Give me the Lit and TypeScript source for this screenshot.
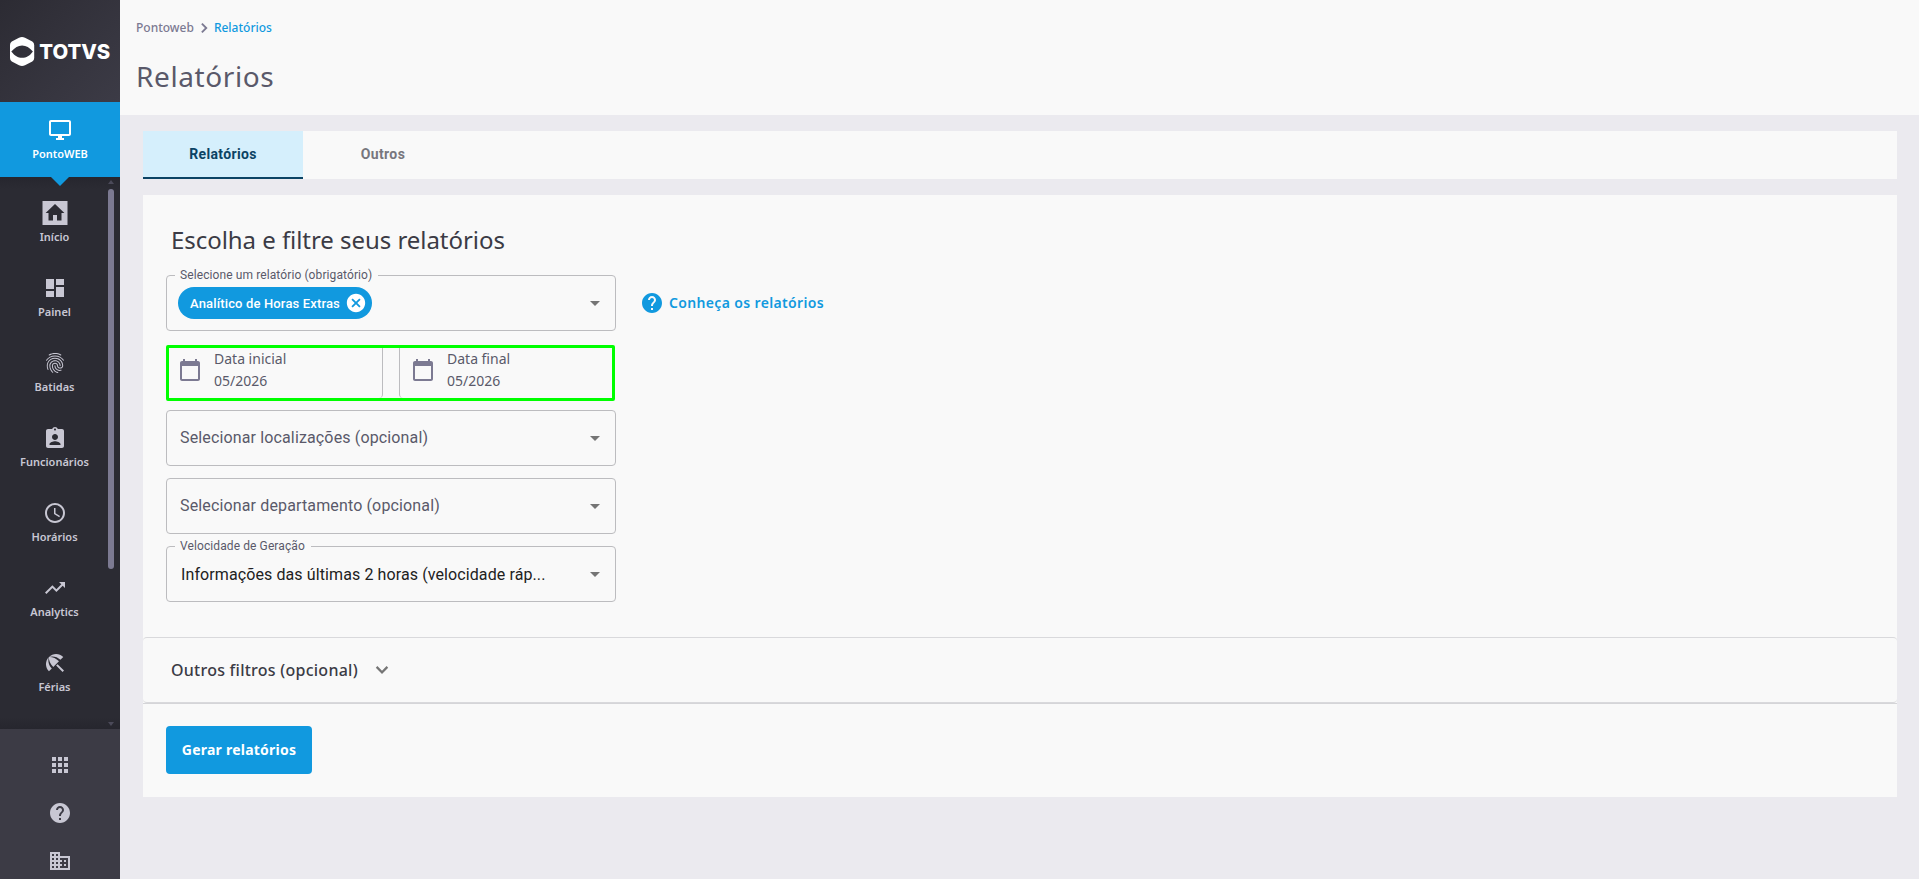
import { LitElement, html, css, svg, nothing } from "lit";
import { customElement } from "lit/decorators.js";

const paths: Record<string, string> = {
  monitor: "M21 2H3c-1.100 0-2 .9-2 2v12c0 1.100.9 2 2 2h7v2H8v2h8v-2h-2v-2h7c1.100 0 2-.9 2-2V4c0-1.100-.9-2-2-2zm0 14H3V4h18v12z",
  home: "M-.5 0h25v24H-.5z M12 3 2.600 12H5.500v7.500h4.500V14h4v5.500h4.500V12h2.900z",
  dashboard: "M3 13h8V3H3v10zm0 8h8v-6H3v6zm10 0h8V11h-8v10zm0-18v6h8V3h-8z",
  fingerprint: "M17.810 4.470c-.08 0-.16-.02-.23-.06C15.660 3.420 14 3 12.010 3c-1.980 0-3.860.47-5.570 1.410-.24.13-.54.04-.68-.2-.13-.24-.04-.55.2-.68C7.820 2.520 9.860 2 12.010 2c2.130 0 3.990.47 6.030 1.520.25.13.34.43.21.67-.09.18-.26.28-.44.28zM3.500 9.720c-.1 0-.2-.03-.29-.09-.23-.16-.28-.47-.12-.7.99-1.400 2.250-2.500 3.750-3.270C9.980 4.040 14 4.030 17.150 5.650c1.500.77 2.760 1.860 3.750 3.250.16.22.11.54-.12.7-.23.16-.54.11-.7-.12-.9-1.260-2.040-2.250-3.390-2.940-2.870-1.470-6.540-1.470-9.400.01-1.360.7-2.500 1.700-3.400 2.960-.08.14-.23.21-.39.21zm6.250 12.070c-.13 0-.26-.05-.35-.15-.87-.87-1.340-1.430-2.010-2.640-.69-1.230-1.050-2.730-1.050-4.340 0-2.970 2.540-5.390 5.660-5.390s5.660 2.420 5.660 5.390c0 .28-.22.5-.5.5s-.5-.22-.5-.5c0-2.420-2.090-4.390-4.660-4.390-2.570 0-4.660 1.970-4.660 4.390 0 1.440.32 2.770.93 3.850.64 1.150 1.080 1.640 1.850 2.420.19.2.19.51 0 .71-.11.1-.24.15-.37.15zm7.170-1.850c-1.190 0-2.240-.3-3.100-.89-1.490-1.010-2.380-2.650-2.380-4.390 0-.28.22-.5.5-.5s.5.22.5.5c0 1.410.72 2.740 1.940 3.560.71.48 1.540.71 2.540.71.24 0 .64-.03 1.040-.1.27-.05.53.13.58.41.05.27-.13.53-.41.58-.57.11-1.070.12-1.210.12zM14.910 22c-.04 0-.09-.01-.13-.02-1.590-.44-2.630-1.030-3.720-2.100-1.400-1.390-2.170-3.240-2.170-5.220 0-1.620 1.380-2.940 3.080-2.940 1.700 0 3.080 1.320 3.080 2.940 0 1.070.93 1.940 2.080 1.940s2.080-.87 2.080-1.940c0-3.770-3.250-6.830-7.250-6.830-2.840 0-5.440 1.580-6.610 4.030-.39.81-.59 1.760-.59 2.800 0 .78.07 2.010.67 3.610.1.26-.03.55-.29.64-.26.1-.55-.04-.64-.29-.49-1.310-.73-2.610-.73-3.960 0-1.200.23-2.290.68-3.240 1.330-2.790 4.280-4.600 7.510-4.600 4.550 0 8.250 3.510 8.250 7.830 0 1.620-1.380 2.940-3.080 2.940s-3.080-1.320-3.080-2.940c0-1.070-.93-1.940-2.080-1.940s-2.080.87-2.080 1.940c0 1.710.66 3.310 1.870 4.510.95.94 1.860 1.460 3.270 1.850.27.07.42.35.35.61-.05.23-.26.38-.47.38z",
  badge: "M19 3h-4.180C14.400 1.840 13.300 1 12 1s-2.400.84-2.820 2H5c-1.100 0-2 .9-2 2v15c0 1.100.9 2 2 2h14c1.100 0 2-.9 2-2V5c0-1.100-.9-2-2-2zm-7-.5c.55 0 1 .45 1 1s-.45 1-1 1-1-.45-1-1 .45-1 1-1zM12 8c1.660 0 3 1.340 3 3s-1.340 3-3 3-3-1.340-3-3 1.340-3 3-3zm5.500 11h-11v-.9c0-1.800 3.700-2.900 5.500-2.900s5.500 1.100 5.500 2.900v.9z",
  clock: "M11.990 2C6.470 2 2 6.480 2 12s4.470 10 9.990 10C17.520 22 22 17.520 22 12S17.520 2 11.990 2zM12 20c-4.420 0-8-3.580-8-8s3.580-8 8-8 8 3.580 8 8-3.580 8-8 8zm.5-13H11v6l5.250 3.150.75-1.230-4.500-2.670z",
  trend: "M16 6l2.290 2.290-4.880 4.880-4-4L2 16.590 3.410 18l6-6 4 4 6.300-6.290L22 12V6z",
  umbrella: "M13.127 14.560l1.430-1.430 6.440 6.443L19.570 21zm4.293-5.730l2.860-2.860c-3.950-3.950-10.350-3.960-14.300-.02 3.930-1.300 8.310-.25 11.440 2.880zM5.950 5.980c-3.940 3.950-3.930 10.350.02 14.300l2.860-2.860C5.700 14.290 4.650 9.910 5.950 5.980zm.02-.02l-.01.01c-.38 3.010 1.170 6.880 4.300 10.020l5.730-5.730c-3.130-3.130-7.010-4.680-10.020-4.300z",
  apps: "M4 8h4V4H4v4zm6 12h4v-4h-4v4zm-6 0h4v-4H4v4zm0-6h4v-4H4v4zm6 0h4v-4h-4v4zm6-10v4h4V4h-4zm-6 4h4V4h-4v4zm6 6h4v-4h-4v4zm0 6h4v-4h-4v4z",
  help: "M12 2C6.480 2 2 6.480 2 12s4.480 10 10 10 10-4.480 10-10S17.520 2 12 2zm1 17h-2v-2h2v2zm2.070-7.750l-.9.92C13.450 12.900 13 13.500 13 15h-2v-.5c0-1.100.45-2.100 1.170-2.830l1.240-1.260c.37-.36.59-.86.59-1.410 0-1.100-.9-2-2-2s-2 .9-2 2H8c0-2.210 1.790-4 4-4s4 1.790 4 4c0 .88-.36 1.680-.93 2.250z",
  building: "M12 7V3H2v18h20V7H12zM6 19H4v-2h2v2zm0-4H4v-2h2v2zm0-4H4V9h2v2zm0-4H4V5h2v2zm4 12H8v-2h2v2zm0-4H8v-2h2v2zm0-4H8V9h2v2zm0-4H8V5h2v2zm10 12h-8v-2h2v-2h-2v-2h2v-2h-2V9h8v10zm-2-8h-2v2h2v-2zm0 4h-2v2h2v-2z",
  calendar: "M20 3h-1V1h-2v2H7V1H5v2H4c-1.100 0-2 .9-2 2v16c0 1.100.9 2 2 2h16c1.100 0 2-.9 2-2V5c0-1.100-.9-2-2-2zm0 18H4V8h16v13z",
  right: "M7.800 17.600 13.400 12 7.800 6.400 9.800 4.400l7.600 7.600-7.600 7.600z",
  down: "M7.410 8.090 12 12.670l4.590-4.580L18.200 9.700 12 15.900 5.800 9.700z",
  close: "M12 2C6.470 2 2 6.470 2 12s4.470 10 10 10 10-4.470 10-10S17.530 2 12 2zm5 13.590L15.590 17 12 13.410 8.410 17 7 15.590 10.590 12 7 8.410 8.410 7 12 10.590 15.590 7 17 8.410 13.410 12 17 15.590z",
};

const icon = (name: string, size = 24) => html`<svg class="icon" width=${size} height=${size} viewBox="0 0 24 24" overflow="visible" aria-hidden="true">
  ${svg`<path fill="currentColor" fill-rule="evenodd" d=${paths[name]}></path>`}</svg>`;

const menu = [
  ["home", "Início"], ["dashboard", "Painel"], ["fingerprint", "Batidas"], ["badge", "Funcionários"],
  ["clock", "Horários"], ["trend", "Analytics"], ["umbrella", "Férias"],
];

@customElement("side-bar")
class SideBar extends LitElement {
  static styles = css`
    :host { display: flex; flex-direction: column; width: 120px; height: 879px; overflow: hidden;
      font-family: "Noto Sans", sans-serif; font-weight: 600; font-size: 11px; color: #c8c7d3; background: #2b2b33; }
    svg { display: block; }
    .brand { height: 102px; flex: none; background: linear-gradient(135deg, #2c2b33, #3c3b46); display: flex; align-items: center; }
    .word { font: 800 20.5px Inter, sans-serif; fill: #fff; }
    .product { height: 75px; flex: none; background: #1199df; color: #fff; display: flex; flex-direction: column;
      align-items: center; padding-top: 16px; box-sizing: border-box; gap: 4px; line-height: 15px; position: relative; }
    .product::after { content: ""; position: absolute; top: 75px; left: 51px; border: 9px solid transparent; border-top-color: #1199df; border-bottom: 0; }
    .menu { height: 552px; flex: none; display: flex; background: linear-gradient(#26262e, #2b2b33 12px, #2b2b33 540px, #26262e); }
    .items { width: 107px; padding: 24px 0 0 1px; display: flex; flex-direction: column; }
    .item { height: 75px; flex: none; display: flex; flex-direction: column; align-items: center; gap: 4px; line-height: 15px; }
    .track { width: 6px; display: flex; flex-direction: column; justify-content: space-between; padding: 3px 0; }
    .up, .dn { border: 3px solid transparent; }
    .up { border-bottom: 4px solid #4b4a59; border-top: 0; }
    .dn { border-top: 4px solid #4b4a59; border-bottom: 0; }
    .thumb { height: 380px; margin: 5px 0 auto; border-radius: 3px; background: #7c7a92; }
    .tools { flex: 1; background: #3c3b45; display: flex; flex-direction: column; align-items: center; gap: 24px; padding-top: 24px; }
  `;
  render() {
    return html`
      <div class="brand"><svg width="120" height="102" viewBox="0 0 120 102">
        <path fill="#fff" fill-rule="evenodd" d="M19 37.800Q22 36.400 25 37.800L32.300 41.500Q34.200 42.600 34.200 45V58Q34.200 60.500 32.300 61.500L25 65.200Q22 66.800 19 65.200L11.800 61.500Q10 60.500 10 58V45Q10 42.600 11.800 41.500ZM11.300 51.500C15 47.500 18 45.500 22.100 45.500S29.500 47.500 32.900 51.500C29.500 56 26.500 57.800 22.100 57.800S15 56 11.300 51.500Z"></path>
        <text class="word" x="39.300" y="59.200" textLength="71" lengthAdjust="spacingAndGlyphs">TOTVS</text>
      </svg></div>
      <div class="product">${icon("monitor")}<span>PontoWEB</span></div>
      <nav class="menu">
        <div class="items">${menu.map(([i, t]) => html`<div class="item">${icon(i)}<span>${t}</span></div>`)}</div>
        <div class="track"><i class="up"></i><i class="thumb"></i><i class="dn"></i></div>
      </nav>
      <div class="tools">${["apps", "help", "building"].map((i) => icon(i))}</div>`;
  }
}

@customElement("select-field")
class SelectField extends LitElement {
  static properties = { label: {}, value: {}, chip: {}, placeholder: {} };
  declare label?: string;
  declare value?: string;
  declare chip?: string;
  declare placeholder?: string;
  static styles = css`
    :host { display: flex; align-items: center; justify-content: space-between; position: relative; box-sizing: border-box;
      width: 450px; height: 56px; border: 1px solid #bcbcbf; border-radius: 4px; padding: 0 15px 0 13px; font: 16px Roboto, sans-serif; color: #5a596a; }
    .label { position: absolute; left: 8px; top: -9px; padding: 0 6px 0 5px; font-size: 12px; line-height: 16px; background: #f9f9f9; letter-spacing: .1px; }
    .place { letter-spacing: .14px; padding-bottom: 2px; }
    .value { color: #212121; padding-left: 1px; width: 370px; letter-spacing: 0.1px; }
    .arrow { border: 5px solid transparent; border-top-color: #757575; border-bottom: 0; }
    .chip { display: flex; align-items: center; gap: 5px; height: 32px; margin-left: -2px; box-sizing: border-box; border-radius: 16px; background: #1199df;
      color: #fff; font-size: 13px; font-weight: 500; letter-spacing: .15px; padding: 0 5px 0 12px; }
    svg { display: block; }
  `;
  render() {
    return html`
      ${this.label ? html`<span class="label">${this.label}</span>` : nothing}
      ${this.chip ? html`<span class="chip">${this.chip}${icon("close", 22)}</span>` : nothing}
      ${this.value ? html`<span class="value">${this.value}</span>` : nothing}
      ${this.placeholder ? html`<span class="place">${this.placeholder}</span>` : nothing}
      <i class="arrow"></i>`;
  }
}

@customElement("app-root")
class AppRoot extends LitElement {
  static styles = css`
    :host { display: flex; width: 1919px; height: 879px; overflow: hidden; background: #ebeaef; font-family: "Noto Sans", sans-serif; color: #5a596a; }
    svg { display: block; }
    .page { flex: 1; }
    header { height: 115px; box-sizing: border-box; background: #f9f9f9; padding: 19px 0 0 16px; }
    .crumbs { display: flex; align-items: center; font-size: 12px; font-weight: 500; line-height: 18px; height: 18px; color: #7c7a92; }
    .crumbs svg { margin: 0 2px; }
    .here { color: #1199df; }
    h1 { margin: 19px 0 0; font-size: 28px; line-height: 40px; font-weight: 400; letter-spacing: .6px; }
    main { padding: 16px 22px 0 23px; display: flex; flex-direction: column; gap: 16px; }
    .tabs { height: 48px; display: flex; background: #f9f9f9; font: 700 14px/46px Roboto, sans-serif; letter-spacing: .35px; }
    .tab { width: 160px; text-align: center; color: #77767d; }
    .on { color: #0b4364; background: #d5effc; border-bottom: 2px solid #0b4364; height: 46px; }
    .card { height: 602px; background: #f9f9f9; }
    .form { height: 442px; box-sizing: border-box; padding: 27px 23px 0; }
    h2 { margin: 0 0 17px 5px; font-size: 24px; line-height: 36px; font-weight: 400; color: #3b3b45; letter-spacing: -.05px; }
    .row { display: flex; align-items: center; gap: 24px; }
    .learn { display: flex; align-items: center; gap: 5px; color: #1199df; font-size: 14px; font-weight: 600; letter-spacing: .35px; }
    .learn span { padding-bottom: 2px; }
    .dates { width: 449px; height: 56px; margin: 14px 0 9px; box-sizing: border-box; border: 3px solid #00ff00; border-radius: 2px; display: flex; justify-content: space-between; }
    .date { display: flex; box-sizing: border-box; width: 214px; padding: 0 0 6px 9px; gap: 12px; align-items: center; font-size: 14px; line-height: 22px; border-right: 1px solid #bcbcbf; border-radius: 0 0 4px 0; }
    .date.end { width: 213px; border-right: 0; border-left: 1px solid #bcbcbf; border-radius: 0 0 0 4px; padding-left: 11px; }
    .date svg { color: #7c7a92; }
    .stack { display: flex; flex-direction: column; gap: 12px; }
    .more { height: 66px; box-sizing: border-box; border: 1px solid #d9d9dc; border-left: 0; border-right: 0; border-radius: 4px; padding-left: 28px; display: flex; align-items: center; gap: 12px; font-size: 16px; font-weight: 500; letter-spacing: .25px; color: #3b3b45; }
    .more svg { color: #757575; }
    .foot { border-top: 1px solid #d5d5d8; padding: 22px 23px; }
    button { border: 0; border-radius: 4px; background: #1199df; color: #fff; width: 146px; height: 48px; padding: 0 0 2px; font: 700 14px "Noto Sans", sans-serif; letter-spacing: .23px; }
  `;
  render() {
    return html`
      <side-bar></side-bar>
      <div class="page">
        <header>
          <div class="crumbs"><span>Pontoweb</span>${icon("right", 16)}<span class="here">Relatórios</span></div>
          <h1>Relatórios</h1>
        </header>
        <main>
          <div class="tabs"><div class="tab on">Relatórios</div><div class="tab">Outros</div></div>
          <section class="card">
            <div class="form">
              <h2>Escolha e filtre seus relatórios</h2>
              <div class="row">
                <select-field label="Selecione um relatório (obrigatório)" chip="Analítico de Horas Extras"></select-field>
                <span class="learn">${icon("help")}<span>Conheça os relatórios</span></span>
              </div>
              <div class="dates">
                <div class="date">${icon("calendar")}<div>Data inicial<br />05/2026</div></div>
                <div class="date end">${icon("calendar")}<div>Data final<br />05/2026</div></div>
              </div>
              <div class="stack">
                <select-field placeholder="Selecionar localizações (opcional)"></select-field>
                <select-field placeholder="Selecionar departamento (opcional)"></select-field>
                <select-field label="Velocidade de Geração" value="Informações das últimas 2 horas (velocidade ráp..."></select-field>
              </div>
            </div>
            <div class="more"><span>Outros filtros (opcional)</span>${icon("down")}</div>
            <div class="foot"><button>Gerar relatórios</button></div>
          </section>
        </main>
      </div>`;
  }
}
